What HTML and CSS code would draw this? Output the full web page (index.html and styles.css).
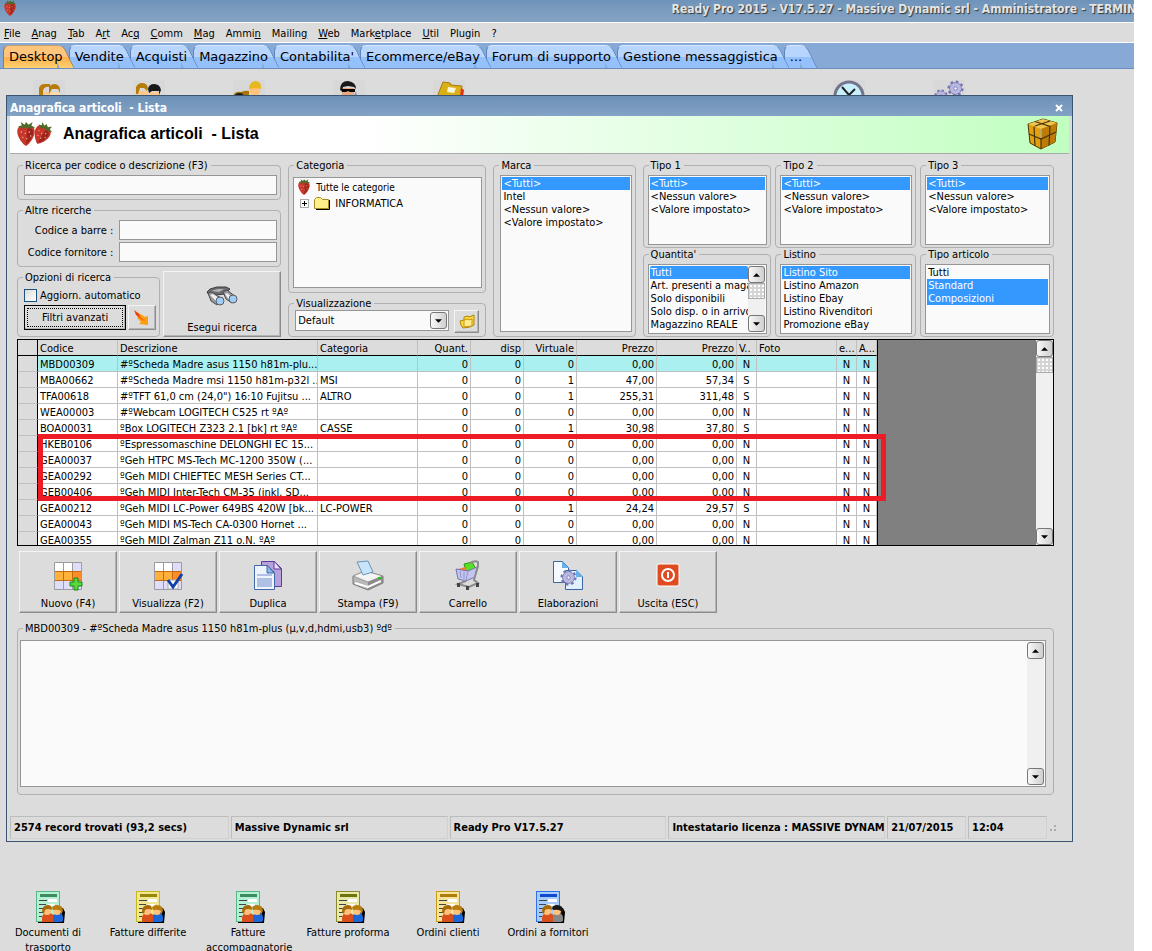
FILE: index.html
```
<!DOCTYPE html>
<html lang="it">

<head>
    <meta charset="UTF-8" />
    <meta name="viewport" content="width=device-width, initial-scale=1.0" />
    <title>Ready Pro 2015</title>
    <link rel="stylesheet" href="styles.css">
</head>

<body>
    <!-- shared icons -->
    <svg class="defs" aria-hidden="true">
        <symbol id="berry" viewBox="0 0 16 18">
            <path d="M8 3C4 1 1 4 1.500 8c.6 4 3.500 8 6.500 10 3-2 5.900-6 6.500-10C15 4 12 1 8 3z" fill="#c8372b" />
            <path d="M9 5c3-1 5 1 4 5-1 3-3 5-5 7z" fill="#9d241c" />
            <path d="M2 3l3 0-1-3 3 2 1-2 2 2 3-2-1 3 3 1-4 1-3-1-3 1z" fill="#4c6b2a" />
            <path d="M4 7h1v1H4zM7 8h1v1H7zM10 7h1v1h-1zM5 11h1v1H5zM8 12h1v1H8zM11 10h1v1h-1z" fill="#f0a080" />
        </symbol>
        <symbol id="people" viewBox="0 0 32 32">
            <path d="M8 17q0 9 5 9t5-9v-5H8z" fill="#ffc98c" />
            <path d="M17 17q0 8 5 8t5-8v-5H17z" fill="#ffd9a8" />
            <path d="M6 16V8q1-4 6-4h5v3q-6-1-7 4v4z" fill="#b87c08" />
            <path d="M16 14V7q2-3 6-3 5 1 5 6v3l-2-4h-6z" fill="#b87c08" />
        </symbol>
        <symbol id="docpeople" viewBox="0 0 34 34">
            <path d="M7 33V20l20-3 5 1 2 4-1 11z" fill="#000" />
            <rect x="5.500" y="1.500" width="23" height="30" fill="currentColor" stroke="var(--edge)" />
            <path d="M9 4h17v3H9z" fill="var(--bar)" />
            <path d="M8 10h8v1H8zM8 14h7v1H8zM8 18h5v1H8zM8 22h4v1H8zM8 26h3v1H8z" fill="#444" />
            <path d="M17 9h9v3h-9zM17 14h7v2h-7z" fill="#fff" />
            <path d="M11 32v-4q0-5 6-5t6 5v4z" fill="#d9501c" />
            <path d="M22 32v-7q2-2 5-2 5 0 5 5v3l-2 1z" fill="var(--coat, #1c68d8)" />
            <circle cx="16" cy="21" r="4" fill="#ffc27a" />
            <circle cx="26" cy="21" r="4" fill="#ffc27a" />
            <path d="M11 22q0-7 6-7 4 0 4 5-4-2-7 0l-1 4z" fill="#a86a08" />
            <path d="M21 18q1-3 5-3 6 0 6 6l-2 4v-4q-3-2-8-1z" fill="var(--hair, #b87c10)" />
        </symbol>
        <symbol id="grid" viewBox="0 0 32 32">
            <path d="M2 3h27v28H2z" fill="#fff" />
            <path d="M20 3h9v28h-9zM2 22h27v9H2z" fill="#dedefa" />
            <path d="M2 12h27v9H2z" fill="#ffb13c" />
            <path d="M20 12h9v9h-9z" fill="#ff8c28" />
            <path d="M2.500 3.500h27v27h-27zM11.500 3v27M20.500 3v27M2 12.500h27M2 21.500h27" fill="none" stroke="#9a9aa0" />
            <path d="M3 12.500h26M3 21.500h26M11.500 13v8M20.500 13v8" stroke="#c46a10" />
        </symbol>
        <symbol id="gear" viewBox="0 0 20 20">
            <circle cx="10" cy="10" r="8" fill="none" stroke="#7474b0" stroke-width="3" stroke-dasharray="3.140 3.140" />
            <circle cx="10" cy="10" r="7" fill="#b8b8e0" stroke="#7878b0" />
            <circle cx="10" cy="10" r="2" fill="#f2f2fb" stroke="#7878b0" />
        </symbol>
        <symbol id="up" viewBox="0 0 8 4"><path d="M0 4h8L4 0z" /></symbol>
        <symbol id="down" viewBox="0 0 8 4"><path d="M0 0h8L4 4z" /></symbol>
    </svg>

    <div class="app">
        <header class="titlebar">
            <svg class="app-icon"><use href="#berry" /></svg>
            <span class="app-title">Ready Pro 2015 - V17.5.27 - Massive Dynamic srl - Amministratore - TERMIN</span>
        </header>

        <nav class="menu">
            <a href="#"><u>F</u>ile</a>
            <a href="#"><u>A</u>nag</a>
            <a href="#"><u>T</u>ab</a>
            <a href="#">A<u>r</u>t</a>
            <a href="#">Ac<u>q</u></a>
            <a href="#"><u>C</u>omm</a>
            <a href="#"><u>M</u>ag</a>
            <a href="#">Ammi<u>n</u></a>
            <a href="#">Mailin<u>g</u></a>
            <a href="#"><u>W</u>eb</a>
            <a href="#">Mark<u>e</u>tplace</a>
            <a href="#"><u>U</u>til</a>
            <a href="#">Plugin</a>
            <a href="#">?</a>
        </nav>

        <nav class="tabs">
            <a class="tab active" href="#"><span>Desktop</span></a>
            <a class="tab" href="#"><span>Vendite</span></a>
            <a class="tab" href="#"><span>Acquisti</span></a>
            <a class="tab" href="#"><span>Magazzino</span></a>
            <a class="tab" href="#"><span>Contabilita'</span></a>
            <a class="tab" href="#"><span>Ecommerce/eBay</span></a>
            <a class="tab" href="#"><span>Forum di supporto</span></a>
            <a class="tab" href="#"><span>Gestione messaggistica</span></a>
            <a class="tab" href="#"><span>...</span></a>
        </nav>

        <main class="desktop">
            <div class="shortcuts top">
                <svg viewBox="0 0 32 32"><use href="#people" /></svg>
                <svg viewBox="0 0 32 32">
                    <path d="M4 17h11v-6H4zM16 17h10v-5H16z" fill="#ffc98c" />
                    <path d="M3 14V7q2-4 6-4 5 0 6 5l-1 3-3-3H7l-2 6z" fill="#b87c08" />
                    <path d="M15 9q1-5 6-5 6 0 7 6l-2 5v-4h-7l-3 2z" fill="#181818" />
                </svg>
                <svg viewBox="0 0 32 32">
                    <path d="M0 16q2-5 8-4 5-2 8-1v6H0z" fill="#a87408" />
                    <path d="M1 16q3-5 9-2l1 3H1z" fill="#181818" />
                    <path d="M16 7h11q1 9-5 9t-6-9z" fill="#ffc27a" />
                    <path d="M16 8q1-7 7-7 6 1 5 8-5-2-11 0z" fill="#e8b820" />
                </svg>
                <svg viewBox="0 0 32 32">
                    <path d="M9 8h12v9H9z" fill="#e8a880" />
                    <path d="M7 10q0-9 8-9 8 1 8 8l-2-2-6-1-5 1-1 4z" fill="#181818" />
                    <path d="M8 9h14v3h-5l-2-1-2 1H9z" fill="#000" />
                    <path d="M21 16l2-5 1 6z" fill="#8888c8" />
                </svg>
                <svg viewBox="0 0 32 32">
                    <path d="M4 17L10 2l7 1 1 2 11 1-1 12z" fill="#d9b018" stroke="#a87c08" />
                    <path d="M15 7l8 1-2 5-7-1z" fill="#fff7d8" />
                    <path d="M28 8l3 2-1 7h-3z" fill="#e83018" />
                </svg>
                <svg class="after-gap" viewBox="0 0 32 32">
                    <circle cx="16" cy="16" r="14" fill="#c8f0fa" stroke="#74748c" stroke-width="3" />
                    <path d="M9 7l7 8 6-6" fill="none" stroke="#222" stroke-width="2" />
                </svg>
                <svg viewBox="0 0 32 32">
                    <use href="#gear" x="14" y="0" width="17" height="17" />
                    <use href="#gear" x="1" y="9" width="14" height="14" />
                </svg>
            </div>

            <section class="window">
                <div class="window-title">
                    <span>Anagrafica articoli  - Lista</span>
                    <button class="close" type="button" aria-label="Chiudi">
                        <svg viewBox="0 0 8 8"><path d="M1 1l6 6M7 1L1 7" stroke="#fff" stroke-width="2" /></svg>
                    </button>
                </div>
                <div class="window-head">
                    <svg class="berries" viewBox="0 0 38 24">
                        <use href="#berry" x="0" y="0" width="22" height="24" />
                        <use href="#berry" x="17" y="1" width="20" height="22" transform="rotate(25 27 12)" />
                    </svg>
                    <h1>Anagrafica articoli  - Lista</h1>
                    <svg class="parcel" viewBox="0 0 32 32">
                        <path d="M1 6L16 1l14 4-2 19-14 7L3 25z" fill="#e0a010" stroke="#4a3404" />
                        <path d="M1 6l13 5 16-6L16 1z" fill="#f0c450" />
                        <path d="M14 11l16-6-2 19-14 7z" fill="#bc7c08" />
                        <path d="M14 11v20M2 16l12 5 15-7M7 8.500L8 28M8 3.500l15 5-1 19M23 3L8 8" fill="none" stroke="#4a3404" stroke-width="1.200" />
                        <path d="M14 11v9" stroke="#fff0b0" />
                    </svg>
                </div>

                <div class="content">
                    <form class="filters">
                        <div class="col">
                            <fieldset>
                                <legend><label for="cerca">Ricerca per codice o descrizione (F3)</label></legend>
                                <input id="cerca" class="field" type="text" />
                            </fieldset>
                            <fieldset class="other">
                                <legend>Altre ricerche</legend>
                                <label for="barre">Codice a barre :</label>
                                <input id="barre" class="field" type="text" />
                                <label for="fornitore">Codice fornitore :</label>
                                <input id="fornitore" class="field" type="text" />
                            </fieldset>
                            <div class="options-row">
                                <fieldset class="options">
                                    <legend>Opzioni di ricerca</legend>
                                    <div class="check">
                                        <input id="auto" type="checkbox" />
                                        <label for="auto">Aggiorn. automatico</label>
                                    </div>
                                    <div class="option-buttons">
                                        <button class="btn default" type="button"><span>Filtri avanzati</span></button>
                                        <button class="btn small" type="button" aria-label="Azzera filtri">
                                            <svg viewBox="0 0 16 16">
                                                <path d="M1 1l7 4 3 2 3-1v9l-9-1 2-2-4-4 1-1z" fill="#ff9c10" />
                                                <path d="M0 0l5 4 1 3 5 4-4-2-5-4z" fill="#e84010" />
                                            </svg>
                                        </button>
                                    </div>
                                </fieldset>
                                <button class="btn big search" type="button">
                                    <svg viewBox="0 0 32 32">
                                        <path d="M1 9l3-3 7-2h9l4 2-5 5-9 1-5 3z" fill="#6c6c70" stroke="#3c3c3c" />
                                        <path d="M5 8l7-2h6l-5 3z" fill="#b4b4b4" />
                                        <path d="M2 10l4-1 10 7-5 6-6-4z" fill="#98989c" stroke="#4c4c50" />
                                        <path d="M4 12l3-1 6 4-3 3z" fill="#f0f0f2" />
                                        <path d="M17 9l4-2 9 7-4 6-6-4z" fill="#98989c" stroke="#4c4c50" />
                                        <path d="M19 11l2-1 5 4-3 3z" fill="#f0f0f2" />
                                        <circle cx="14" cy="18" r="4" fill="#a0ccf8" stroke="#5c5c64" />
                                        <circle cx="27" cy="16" r="4" fill="#a0ccf8" stroke="#5c5c64" />
                                    </svg>
                                    <span>Esegui ricerca</span>
                                </button>
                            </div>
                        </div>

                        <div class="col">
                            <fieldset class="category">
                                <legend>Categoria</legend>
                                <ul class="tree">
                                    <li><svg class="tree-berry"><use href="#berry" /></svg>Tutte le categorie</li>
                                    <li class="node">
                                        <button class="expand" type="button" aria-label="Espandi"></button>
                                        <svg class="folder" viewBox="0 0 16 14">
                                            <path d="M2 13.500h13.500V4" fill="none" stroke="#000" />
                                            <path d="M.5 3.500l2-2h4l2 2h6v9H.5z" fill="#fff08c" stroke="#a88c20" />
                                        </svg>
                                        <span>INFORMATICA</span>
                                    </li>
                                </ul>
                            </fieldset>
                            <fieldset class="view">
                                <legend><label for="vista">Visualizzazione</label></legend>
                                <div class="combo">
                                    <select id="vista"><option>Default</option></select>
                                    <span class="arrow"><svg><use href="#down" /></svg></span>
                                </div>
                                <button class="btn small" type="button" aria-label="Apri">
                                    <svg viewBox="0 0 16 16">
                                        <path d="M1 7l4-1V3l4-1 1 1 5-2v10l-4 2-7 1-2-3z" fill="#ffd83c" stroke="#b08408" />
                                        <path d="M5 13V6l4-1 1 1 3-1v7z" fill="#ffec90" stroke="#c89810" />
                                    </svg>
                                </button>
                            </fieldset>
                        </div>

                        <fieldset>
                            <legend><label for="marca">Marca</label></legend>
                            <select id="marca" class="list" multiple>
                                <option selected>&lt;Tutti&gt;</option>
                                <option>Intel</option>
                                <option>&lt;Nessun valore&gt;</option>
                                <option>&lt;Valore impostato&gt;</option>
                            </select>
                        </fieldset>

                        <div class="types">
                            <fieldset>
                                <legend><label for="tipo1">Tipo 1</label></legend>
                                <select id="tipo1" class="list" multiple>
                                    <option selected>&lt;Tutti&gt;</option>
                                    <option>&lt;Nessun valore&gt;</option>
                                    <option>&lt;Valore impostato&gt;</option>
                                </select>
                            </fieldset>
                            <fieldset>
                                <legend><label for="tipo2">Tipo 2</label></legend>
                                <select id="tipo2" class="list" multiple>
                                    <option selected>&lt;Tutti&gt;</option>
                                    <option>&lt;Nessun valore&gt;</option>
                                    <option>&lt;Valore impostato&gt;</option>
                                </select>
                            </fieldset>
                            <fieldset>
                                <legend><label for="tipo3">Tipo 3</label></legend>
                                <select id="tipo3" class="list" multiple>
                                    <option selected>&lt;Tutti&gt;</option>
                                    <option>&lt;Nessun valore&gt;</option>
                                    <option>&lt;Valore impostato&gt;</option>
                                </select>
                            </fieldset>
                            <fieldset>
                                <legend><label for="quantita">Quantita'</label></legend>
                                <div class="list-box">
                                    <select id="quantita" multiple>
                                        <option selected>Tutti</option>
                                        <option>Art. presenti a magazzino</option>
                                        <option>Solo disponibili</option>
                                        <option>Solo disp. o in arrivo</option>
                                        <option>Magazzino REALE</option>
                                    </select>
                                    <div class="scroll">
                                        <button class="arrow" type="button" aria-label="Su"><svg><use href="#up" /></svg></button>
                                        <span class="thumb"></span>
                                        <button class="arrow end" type="button" aria-label="Giu"><svg><use href="#down" /></svg></button>
                                    </div>
                                </div>
                            </fieldset>
                            <fieldset>
                                <legend><label for="listino">Listino</label></legend>
                                <select id="listino" class="list" multiple>
                                    <option selected>Listino Sito</option>
                                    <option>Listino Amazon</option>
                                    <option>Listino Ebay</option>
                                    <option>Listino Rivenditori</option>
                                    <option>Promozione eBay</option>
                                </select>
                            </fieldset>
                            <fieldset>
                                <legend><label for="tipoart">Tipo articolo</label></legend>
                                <select id="tipoart" class="list" multiple>
                                    <option>Tutti</option>
                                    <option selected>Standard</option>
                                    <option selected>Composizioni</option>
                                </select>
                            </fieldset>
                        </div>
                    </form>

                    <div class="grid-wrap">
                        <div class="grid">
                            <table>
                                <colgroup>
                                    <col class="c-head"><col class="c-80"><col class="c-200"><col class="c-100">
                                    <col class="c-53"><col class="c-53"><col class="c-53"><col class="c-80"><col class="c-80">
                                    <col class="c-20"><col class="c-80"><col class="c-20"><col class="c-20">
                                </colgroup>
                                <thead>
                                    <tr><th></th><th>Codice</th><th>Descrizione</th><th>Categoria</th><th class="n">Quant.</th><th class="n">disp</th><th class="n">Virtuale</th><th class="n">Prezzo</th><th class="n">Prezzo</th><th>V..</th><th>Foto</th><th>e...</th><th>A...</th></tr>
                                </thead>
                                <tbody>
                                    <tr class="selected"><th></th><td>MBD00309</td><td>#ºScheda Madre asus 1150 h81m-plu...</td><td></td><td class="n">0</td><td class="n">0</td><td class="n">0</td><td class="n">0,00</td><td class="n">0,00</td><td class="f">N</td><td></td><td class="f">N</td><td class="f">N</td></tr>
                                    <tr><th></th><td>MBA00662</td><td>#ºScheda Madre msi 1150 h81m-p32l ...</td><td>MSI</td><td class="n">0</td><td class="n">0</td><td class="n">1</td><td class="n">47,00</td><td class="n">57,34</td><td class="f">S</td><td></td><td class="f">N</td><td class="f">N</td></tr>
                                    <tr><th></th><td>TFA00618</td><td>#ºTFT 61,0 cm (24,0") 16:10 Fujitsu ...</td><td>ALTRO</td><td class="n">0</td><td class="n">0</td><td class="n">1</td><td class="n">255,31</td><td class="n">311,48</td><td class="f">S</td><td></td><td class="f">N</td><td class="f">N</td></tr>
                                    <tr><th></th><td>WEA00003</td><td>#ºWebcam LOGITECH C525 rt ºAº</td><td></td><td class="n">0</td><td class="n">0</td><td class="n">0</td><td class="n">0,00</td><td class="n">0,00</td><td class="f">N</td><td></td><td class="f">N</td><td class="f">N</td></tr>
                                    <tr><th></th><td>BOA00031</td><td>ºBox LOGITECH Z323 2.1 [bk] rt ºAº</td><td>CASSE</td><td class="n">0</td><td class="n">0</td><td class="n">1</td><td class="n">30,98</td><td class="n">37,80</td><td class="f">S</td><td></td><td class="f">N</td><td class="f">N</td></tr>
                                    <tr><th></th><td>HKEB0106</td><td>ºEspressomaschine DELONGHI EC 15...</td><td></td><td class="n">0</td><td class="n">0</td><td class="n">0</td><td class="n">0,00</td><td class="n">0,00</td><td class="f">N</td><td></td><td class="f">N</td><td class="f">N</td></tr>
                                    <tr><th></th><td>GEA00037</td><td>ºGeh HTPC MS-Tech MC-1200 350W (...</td><td></td><td class="n">0</td><td class="n">0</td><td class="n">0</td><td class="n">0,00</td><td class="n">0,00</td><td class="f">N</td><td></td><td class="f">N</td><td class="f">N</td></tr>
                                    <tr><th></th><td>GEA00292</td><td>ºGeh MIDI CHIEFTEC MESH Series CT...</td><td></td><td class="n">0</td><td class="n">0</td><td class="n">0</td><td class="n">0,00</td><td class="n">0,00</td><td class="f">N</td><td></td><td class="f">N</td><td class="f">N</td></tr>
                                    <tr><th></th><td>GEB00406</td><td>ºGeh MIDI Inter-Tech CM-35 (inkl. SD...</td><td></td><td class="n">0</td><td class="n">0</td><td class="n">0</td><td class="n">0,00</td><td class="n">0,00</td><td class="f">N</td><td></td><td class="f">N</td><td class="f">N</td></tr>
                                    <tr><th></th><td>GEA00212</td><td>ºGeh MIDI LC-Power 649BS 420W [bk...</td><td>LC-POWER</td><td class="n">0</td><td class="n">0</td><td class="n">1</td><td class="n">24,24</td><td class="n">29,57</td><td class="f">S</td><td></td><td class="f">N</td><td class="f">N</td></tr>
                                    <tr><th></th><td>GEA00043</td><td>ºGeh MIDI MS-Tech CA-0300 Hornet ...</td><td></td><td class="n">0</td><td class="n">0</td><td class="n">0</td><td class="n">0,00</td><td class="n">0,00</td><td class="f">N</td><td></td><td class="f">N</td><td class="f">N</td></tr>
                                    <tr><th></th><td>GEA00355</td><td>ºGeh MIDI Zalman Z11 o.N. ºAº</td><td></td><td class="n">0</td><td class="n">0</td><td class="n">0</td><td class="n">0,00</td><td class="n">0,00</td><td class="f">N</td><td></td><td class="f">N</td><td class="f">N</td></tr>
                                </tbody>
                            </table>
                            <div class="scroll">
                                <button class="arrow" type="button" aria-label="Su"><svg><use href="#up" /></svg></button>
                                <span class="thumb"></span>
                                <button class="arrow end" type="button" aria-label="Giu"><svg><use href="#down" /></svg></button>
                            </div>
                        </div>
                        <div class="marker"></div>
                    </div>

                    <div class="toolbar">
                        <button class="btn big" type="button">
                            <svg viewBox="0 0 32 32">
                                <use href="#grid" />
                                <path d="M22 19h4v4h4v4h-4v4h-4v-4h-4v-4h4z" fill="#5cd83c" stroke="#0c8c10" />
                            </svg>
                            <span>Nuovo (F4)</span>
                        </button>
                        <button class="btn big" type="button">
                            <svg viewBox="0 0 32 32">
                                <use href="#grid" />
                                <path d="M16 21h10v9H16z" fill="#fff" stroke="#aaa" />
                                <path d="M16 21l5 7 9-13" fill="none" stroke="#1040a8" stroke-width="3" />
                            </svg>
                            <span>Visualizza (F2)</span>
                        </button>
                        <button class="btn big" type="button">
                            <svg viewBox="0 0 32 32">
                                <path d="M9.500 2.500h13l7 7v18h-20z" fill="#b8a0dc" stroke="#5c3c98" />
                                <path d="M22 2v8h7z" fill="#e8e0f8" stroke="#5c3c98" />
                                <path d="M2.500 6.500h13l7 7v17h-20z" fill="#eef4fd" stroke="#4468a4" />
                                <path d="M5 15h15v2H5zM5 19h15v9H5z" fill="#b0c0e4" />
                                <path d="M15 6v8h7z" fill="#88b8f0" stroke="#4468a4" />
                            </svg>
                            <span>Duplica</span>
                        </button>
                        <button class="btn big" type="button">
                            <svg viewBox="0 0 32 32">
                                <path d="M1 17l12-5 18 5v7l-15 7L1 25z" fill="#b8b8b8" stroke="#777" />
                                <path d="M1 17l12-5 18 5-15 6z" fill="#f4f4f4" stroke="#999" />
                                <path d="M16 23l15-6v7l-15 7z" fill="#8c8c8c" />
                                <path d="M5 3l11-1 5 11-10 3z" fill="#c8e4fa" stroke="#6a94b8" />
                                <path d="M3 24l13 4 13-6" fill="none" stroke="#fff" stroke-width="2" />
                                <path d="M26 19h4" stroke="#38b828" stroke-width="2" />
                            </svg>
                            <span>Stampa (F9)</span>
                        </button>
                        <button class="btn big" type="button">
                            <svg viewBox="0 0 32 32">
                                <path d="M12 5l8-2 4 7-10 3z" fill="#58e028" stroke="#2c9818" />
                                <path d="M6 10l7-2 3 5-8 2z" fill="#ff7838" />
                                <path d="M4 10l12 2 9-4-2 10-9 4-8-2z" fill="#c4c4f0" stroke="#7474b0" />
                                <path d="M8 12l1 7M12 13v7M16 12l-2 9" stroke="#9494c8" />
                                <path d="M18 4q5-3 8-1v4l-4 14 4 3-9 4-11-3 8-3" fill="none" stroke="#8c8c8c" stroke-width="2" />
                                <path d="M5 24h3v4H5zM14 27h3v4h-3zM24 24h3v4h-3z" fill="#444" />
                            </svg>
                            <span>Carrello</span>
                        </button>
                        <button class="btn big" type="button">
                            <svg viewBox="0 0 32 32">
                                <path d="M1.500 2.500h9l6 6v15h-15z" fill="#f4faff" stroke="#3c64a0" />
                                <path d="M13.500 11.500h11l6 6v13h-17z" fill="#e0f0ff" stroke="#3c64a0" />
                                <path d="M10 2v7h7zM24 10v8h7z" fill="#68b0e8" />
                                <use href="#gear" x="8" y="10" width="17" height="17" />
                            </svg>
                            <span>Elaborazioni</span>
                        </button>
                        <button class="btn big" type="button">
                            <svg viewBox="0 0 32 32">
                                <rect x="5" y="5" width="22" height="22" rx="2" fill="#e04a20" stroke="#fff" />
                                <circle cx="16" cy="16" r="6" fill="none" stroke="#fff" stroke-width="2" />
                                <path d="M16 13v6" stroke="#fff" stroke-width="2" />
                            </svg>
                            <span>Uscita (ESC)</span>
                        </button>
                    </div>

                    <fieldset class="detail">
                        <legend><label for="dettaglio">MBD00309 - #ºScheda Madre asus 1150 h81m-plus (µ,v,d,hdmi,usb3) ºdº</label></legend>
                        <div class="detail-box">
                            <textarea id="dettaglio"></textarea>
                            <div class="scroll">
                                <button class="arrow" type="button" aria-label="Su"><svg><use href="#up" /></svg></button>
                                <button class="arrow end" type="button" aria-label="Giu"><svg><use href="#down" /></svg></button>
                            </div>
                        </div>
                    </fieldset>
                </div>

                <footer class="status">
                    <span>2574 record trovati (93,2 secs)</span>
                    <span>Massive Dynamic srl</span>
                    <span>Ready Pro V17.5.27</span>
                    <span>Intestatario licenza : MASSIVE DYNAM</span>
                    <span>21/07/2015</span>
                    <span>12:04</span>
                    <svg class="grip" viewBox="0 0 8 8"><path d="M5 1h2v2H5zM1 5h2v2H1zM5 5h2v2H5z" fill="#aaa" /></svg>
                </footer>
            </section>

            <div class="shortcuts bottom">
                <a class="green" href="#"><svg><use href="#docpeople" /></svg>Documenti di trasporto</a>
                <a class="yellow" href="#"><svg><use href="#docpeople" /></svg>Fatture differite</a>
                <a class="green" href="#"><svg><use href="#docpeople" /></svg>Fatture accompagnatorie</a>
                <a class="olive" href="#"><svg><use href="#docpeople" /></svg>Fatture proforma</a>
                <a class="gold" href="#"><svg><use href="#docpeople" /></svg>Ordini clienti</a>
                <a class="blue" href="#"><svg><use href="#docpeople" /></svg>Ordini a fornitori</a>
            </div>
        </main>
    </div>
</body>

</html>
```
FILE: styles.css
```
* {
  box-sizing: border-box;
}

body {
  margin: 0;
  background-color: #fff;
  color: #000;
  font: 11px/13px 'DejaVu Sans Condensed', Tahoma, sans-serif;
}

a {
  color: inherit;
  text-decoration: none;
}

button,
input,
select,
textarea {
  font: inherit;
  color: inherit;
  margin: 0;
}

.defs {
  display: none;
}

.app {
  margin-right: 18px;
  height: 100vh;
  overflow: hidden;
  background-color: #dcdcdc;
}

/* main window bar and menu */
.titlebar {
  display: flex;
  justify-content: space-between;
  height: 22px;
  overflow: hidden;
  background: linear-gradient(#6f94b9, #85a4c4);
}

.app-icon {
  width: 14px;
  height: 16px;
  margin-left: 3px;
  flex: none;
}

.app-title {
  margin-right: -2px;
  color: #e4e4e4;
  font-size: 12px;
  line-height: 18px;
  font-weight: bold;
  white-space: nowrap;
  text-shadow: 1px 1px 1px #333;
}

.menu {
  display: flex;
  gap: 11px;
  padding: 4px 4px 2px;
  border-top: 1px solid #fff;
  border-bottom: 1px solid #fff;
}

.tabs {
  display: flex;
  height: 26px;
  padding: 2px 3px 0;
  background-color: #87a9d6;
  border-bottom: 1px solid #6b8dbd;
  font: 13px/23px 'DejaVu Sans', Verdana, sans-serif;
}

.tab {
  --face: linear-gradient(#b8d6fd 50%, #94c0fb 50%);
  --line: #5f86bc;
  --shine: #d8e8ff;
  position: relative;
  padding: 0 6px;
  white-space: nowrap;
}

.tab span {
  position: relative;
  z-index: 2;
}

/* tab face */
.tab::before {
  content: "";
  position: absolute;
  inset: 0 12px 0 0;
  z-index: 0;
  background: var(--face);
  border-left: 1px solid var(--line);
  border-top: 1px solid var(--shine);
  border-radius: 6px 0 0 0;
}

/* slanted right side, laid over the next tab */
.tab::after {
  content: "";
  position: absolute;
  top: 0;
  right: 0;
  bottom: 0;
  width: 14px;
  z-index: 1;
  background: var(--face);
  border-top: 1px solid var(--shine);
  border-right: 1px solid var(--line);
  border-radius: 0 6px 0 0;
  transform: skewX(26deg);
}

.tab.active {
  --face: linear-gradient(#ffc57c 50%, #ffb04a 50%, #ffcf70);
  --line: #a07848;
  --shine: #c89c68;
}

.tab:last-child {
  padding-right: 10px;
}

/* desktop */
.shortcuts {
  display: flex;
}

.shortcuts.top {
  padding: 11px 0 0 33px;
  gap: 68px;
}

.shortcuts.top svg {
  width: 32px;
  height: 32px;
  flex: none;
  background-color: #d8d8d8;
}

.shortcuts.top .after-gap {
  margin-left: 300px;
}

.shortcuts.bottom {
  margin-top: 48px;
}

.shortcuts.bottom a {
  width: 100px;
  padding: 0 10px 0 6px;
  text-align: center;
  line-height: 15px;
}

.shortcuts.bottom svg {
  display: block;
  width: 34px;
  height: 34px;
  margin: 0 auto 1px;
}

.green { --edge: #58b888; --bar: #3c8c60; }
.yellow { --edge: #c8b820; --bar: #988408; }
.olive { --edge: #8c8830; --bar: #6c7410; }
.gold { --edge: #c89c18; --bar: #b07c08; }
.blue { --edge: #3070e8; --bar: #1048d0; --coat: #888; --hair: #181818; }

.green svg { color: #b4f0d4; }
.yellow svg { color: #f0e890; }
.olive svg { color: #e8e8a8; }
.gold svg { color: #f4e49c; }
.blue svg { color: #a4ccfc; }

/* article window */
.window {
  position: relative;
  z-index: 3;
  margin: -17px 61px 0 6px;
  border: 1px solid #3c5470;
  background-color: #dcdcdc;
}

.window-title {
  display: flex;
  align-items: center;
  justify-content: space-between;
  height: 20px;
  padding: 4px 7px 0 3px;
  background: linear-gradient(#6c90b6, #83a3c6);
  color: #fff;
  font-size: 12px;
  font-weight: bold;
  white-space: pre;
}

.close {
  display: flex;
  padding: 1px;
  border: 1px solid #7c9cc0;
  background: none;
}

.close svg {
  width: 8px;
  height: 8px;
}

.window-head {
  display: flex;
  align-items: center;
  height: 38px;
  margin: 0 3px;
  padding: 0 10px 2px 5px;
  border-bottom: 1px solid #aaa;
  background: linear-gradient(90deg, #fff 33%, #c0ffc0);
}

.window-head h1 {
  flex: 1;
  margin: 0 0 0 10px;
  font: bold 16px/20px 'Liberation Sans', Arial, sans-serif;
  white-space: pre;
}

.berries {
  width: 38px;
  height: 24px;
}

.parcel {
  width: 32px;
  height: 32px;
}

.content {
  padding: 5px 18px 0 10px;
}

fieldset {
  min-width: 0;
  margin: 0;
  padding: 3px 3px 4px 6px;
  border: 1px solid #b0b0b0;
  border-radius: 4px;
}

legend {
  margin-left: -1px;
  padding: 0 3px 0 2px;
}

.field {
  display: block;
  width: 100%;
  height: 20px;
  padding: 1px 3px;
  border: 1px solid #969696;
  background-color: #fafafa;
}

/* filters */
.filters {
  display: grid;
  grid-template-columns: 264fr 198fr 142fr 411fr;
  gap: 7px;
}

.col {
  display: flex;
  flex-direction: column;
  gap: 4px;
}

.other {
  display: grid;
  grid-template-columns: auto 158px;
  align-items: center;
  gap: 2px 6px;
  padding-top: 3px;
}

.other > label {
  text-align: right;
}

.options-row {
  display: grid;
  flex: 1;
  grid-template-columns: 143fr 118fr;
  gap: 3px;
}

.options {
  padding: 5px 3px 3px 6px;
}

.check {
  display: flex;
  align-items: center;
  gap: 3px;
}

.check input {
  appearance: none;
  width: 13px;
  height: 13px;
  border: 1px solid #1c5180;
  background: linear-gradient(135deg, #dcdcd7, #fff);
}

.option-buttons {
  display: flex;
  gap: 2px;
  margin-top: 3px;
}

.btn {
  padding: 0;
  border: 1px solid;
  border-color: #f4f4f4 #8c8c8c #8c8c8c #f4f4f4;
  box-shadow: inset -1px -1px #b4b4b4;
  background-color: #dcdcdc;
}

.btn.default {
  flex: 1;
  height: 25px;
  padding: 2px;
  border-color: #000;
}

.btn.default span {
  display: block;
  border: 1px dotted #000;
  line-height: 17px;
}

.btn.small {
  display: flex;
  align-items: center;
  justify-content: center;
  width: 28px;
  height: 25px;
}

.btn.small svg {
  width: 16px;
  height: 16px;
}

.btn.big {
  display: flex;
  flex-direction: column;
  align-items: center;
  justify-content: space-between;
  padding: 7px 0 2px;
}

.btn.big.search {
  padding-top: 11px;
}

.btn.big svg {
  width: 32px;
  height: 32px;
}

.category {
  display: flex;
  flex: 1;
  padding: 5px 3px 4px 4px;
}

.category legend,
.types legend {
  margin-left: 1px;
}

.tree {
  flex: 1;
  margin: 0;
  padding: 1px 3px;
  border: 1px solid #969696;
  background-color: #fafafa;
  list-style: none;
  font-size: 10px;
}

.tree li {
  display: flex;
  align-items: center;
  gap: 5px;
  height: 16px;
}

.tree-berry {
  width: 14px;
  height: 16px;
}

.tree .node {
  padding-left: 3px;
  font-size: 11px;
}

.expand {
  width: 9px;
  height: 9px;
  padding: 0;
  border: 1px solid #aaa;
  background: linear-gradient(#000, #000) center / 5px 1px no-repeat,
    linear-gradient(#000, #000) center / 1px 5px no-repeat, #fff;
}

.folder {
  width: 16px;
  height: 14px;
}

.view {
  display: flex;
  gap: 5px;
  padding: 0 6px 3px;
}

.combo {
  position: relative;
  flex: 1;
}

.combo select {
  appearance: none;
  width: 100%;
  height: 21px;
  padding: 0 2px;
  border: 1px solid #969696;
  border-radius: 0;
  background-color: #fafafa;
}

.combo .arrow {
  position: absolute;
  top: 2px;
  right: 2px;
  pointer-events: none;
}

.view .btn.small {
  width: 25px;
  height: 23px;
}

.list,
.list-box {
  display: block;
  width: 100%;
  height: 70px;
  padding: 1px;
  border: 1px solid #969696;
  border-radius: 0;
  background-color: #fafafa;
  overflow: hidden;
}

#marca {
  height: 100%;
}

option {
  height: 13px;
  min-height: 13px;
  padding: 0 1px;
  line-height: 13px;
}

select[multiple] option:checked {
  background: linear-gradient(#39f, #39f);
  color: #fff;
  -webkit-text-fill-color: #fff;
}

.list-box {
  display: flex;
}

.list-box select {
  flex: 1;
  min-width: 0;
  padding: 0;
  border: 0;
  background: none;
  overflow: hidden;
}

.types {
  display: grid;
  grid-template-columns: 129fr 141fr 134fr;
  column-gap: 4px;
}

.types fieldset {
  padding: 3px 3px 2px 4px;
}

/* scrollbars */
.scroll {
  display: flex;
  flex-direction: column;
  flex: none;
  width: 17px;
  background-color: #f0f0f0;
}

.arrow {
  display: flex;
  align-items: center;
  justify-content: center;
  width: 17px;
  height: 17px;
  padding: 0;
  border: 1px solid #777;
  border-radius: 3px;
  background: linear-gradient(90deg, #f8f8f8, #cfcfcf);
}

.arrow svg {
  width: 7px;
  height: 4px;
}

.arrow.end {
  margin-top: auto;
}

.thumb {
  width: 17px;
  height: 16px;
  border: 1px solid #aaa;
  background: radial-gradient(#fff 1px, transparent 1px) 0 0 / 4px 4px, #d4d4d4;
}

/* article grid */
.grid-wrap {
  position: relative;
  margin-top: 2px;
}

.grid {
  display: flex;
  justify-content: space-between;
  height: 207px;
  overflow: hidden;
  border: 1px solid #000;
  background-color: #808080;
}

table {
  table-layout: fixed;
  width: 860px;
  flex: none;
  border-collapse: separate;
  border-spacing: 0;
  border-right: 1px solid #000;
}

.c-head { width: 20px; }
.c-20 { width: 20px; }
.c-53 { width: 53px; }
.c-80 { width: 80px; }
.c-100 { width: 100px; }
.c-200 { width: 200px; }

th,
td {
  height: 16px;
  padding: 2px 0 0 2px;
  border-right: 1px solid #c0c0c0;
  border-bottom: 1px solid #c0c0c0;
  background-color: #fff;
  overflow: hidden;
  text-align: left;
  font-weight: normal;
  line-height: 13px;
  white-space: nowrap;
}

th {
  background-color: #dcdcdc;
}

thead th {
  border-bottom-color: #000;
}

th:first-child {
  border-right-color: #000;
}

.selected td {
  background-color: #aaf0f0;
}

.n {
  padding-right: 2px;
  text-align: right;
}

.f {
  padding-right: 2px;
  text-align: center;
}

/* frame round the four highlighted rows */
.marker {
  position: absolute;
  top: 95px;
  left: 21px;
  width: 848px;
  height: 67px;
  border: 5px solid #ed1c24;
}

/* toolbar */
.toolbar {
  display: flex;
  gap: 2px;
  padding: 5px 2px 9px;
}

.toolbar .btn {
  width: 98px;
  height: 62px;
}

.detail {
  padding: 5px 7px 7px 2px;
}

.detail legend {
  margin-left: 3px;
}

.detail-box {
  display: flex;
  height: 147px;
  padding: 1px;
  border: 1px solid #969696;
  background-color: #fafafa;
}

.detail-box textarea {
  flex: 1;
  padding: 2px;
  border: 0;
  background: none;
  resize: none;
}

/* status bar */
.status {
  display: grid;
  grid-template-columns: 219fr 217fr 217fr 217fr 79fr 79fr 20fr;
  gap: 2px;
  margin: 21px 3px 2px;
  font-weight: bold;
}

.status span {
  min-width: 0;
  padding: 3px;
  border: 1px solid;
  border-color: #bcbcbc #d0d0d0 #d0d0d0 #bcbcbc;
  overflow: hidden;
  line-height: 15px;
  white-space: nowrap;
}

.grip {
  width: 8px;
  height: 8px;
  align-self: center;
}
```
